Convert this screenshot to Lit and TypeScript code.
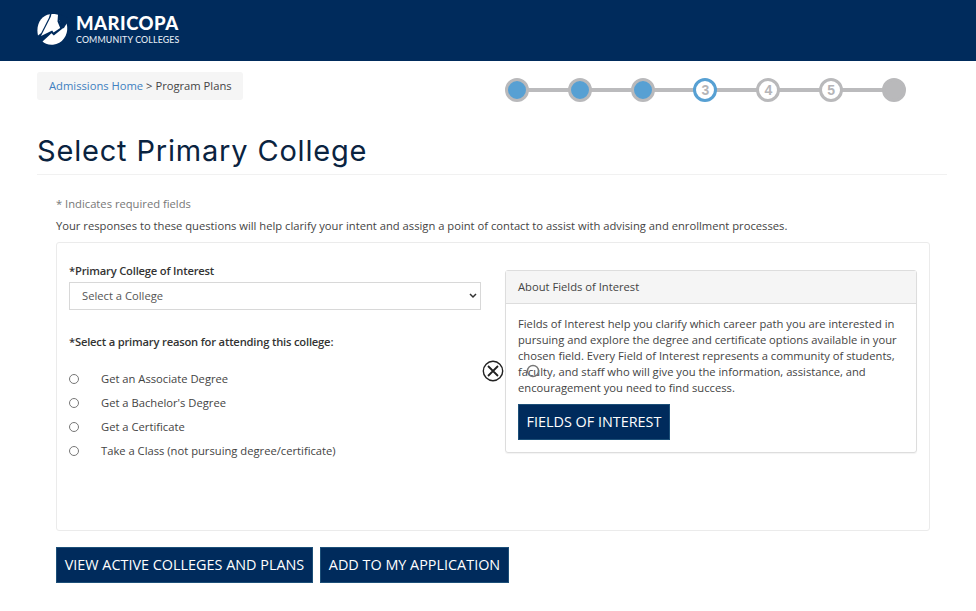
import { LitElement, html, css } from "lit";
import { customElement, property } from "lit/decorators.js";
import { classMap } from "lit/directives/class-map.js";

@customElement("college-header")
class CollegeHeader extends LitElement {
  static styles = css`
    :host { display: flex; gap: 8px; height: 61px; background: #002b5c; box-sizing: border-box; padding: 13px 0 0 36px; }
    svg { display: block; }
    .mark { fill: #fff; }
    .words { white-space: nowrap; padding-top: 1px; }
    .name { font: 900 18.5px/19px Lato, sans-serif; color: #fff; letter-spacing: 0.5px; }
    .sub { font: 500 8.8px/11px Lato, sans-serif; color: #e2eaf3; letter-spacing: 0.16px; margin-top: 1px; }
  `;
  render() {
    return html`<svg width="32" height="34" viewBox="0 0 32 34">
      <path class="mark" d="M2 22.500 C-.5 12 5 2 14 1.200 L12.800 5 L5.200 20 Z" />
      <path class="mark" d="M14.800 3.800 L15.500 1 C18 .8 20.500 1 22 1.800 L21.500 8.500 L24.200 15 L17.500 19.600 L16.200 17.500 L5 23 Z" />
      <path class="mark" d="M23.500 2.500 C28 5 31 9 31.200 14 C32 22 26.500 31 17 31.700 C12 32 8.500 30.700 6.500 28.500 L15.500 20.200 L17.800 22.500 L28.500 14 L23 7 Z" />
      <path fill="#002b5c" d="M23 1 L33 5 L30.800 10.500 L27.500 15.500 L22 5 Z" />
    </svg>
    <div class="words"><div class="name">MARICOPA</div><div class="sub">COMMUNITY COLLEGES</div></div>`;
  }
}

@customElement("step-track")
class StepTrack extends LitElement {
  static styles = css`
    :host { display: flex; align-items: center; justify-content: space-between; width: 401px; height: 24px;
      background: linear-gradient(#bbbbbd, #bbbbbd) center / 380px 4px no-repeat; }
    .step { width: 24px; height: 24px; box-sizing: border-box; border-radius: 50%; border: 3px solid #b9b9bb;
      display: flex; align-items: center; justify-content: center; background: #fff; color: #b5b5b8;
      font: 700 14px/18px "Liberation Sans", sans-serif; }
    .done { background: #57a0d3; }
    .current { border-color: #57a0d3; }
    .last { background: #b9b9bb; }
  `;
  render() {
    return ["done", "done", "done", "current", "todo", "todo", "last"].map(
      (kind, i) => html`<span class=${classMap({ step: true, [kind]: true })}>${i > 2 && i < 6 ? i : ""}</span>`
    );
  }
}

@customElement("radio-option")
class RadioOption extends LitElement {
  @property() label = "";
  static styles = css`
    :host { display: flex; align-items: center; height: 24px; gap: 22px; }
    .dot { width: 10px; height: 10px; box-sizing: border-box; border: 1px solid #777; border-radius: 50%; background: #fff; }
  `;
  render() {
    return html`<span class="dot"></span><span>${this.label}</span>`;
  }
}

const reasons = [
  "Get an Associate Degree",
  "Get a Bachelor's Degree",
  "Get a Certificate",
  "Take a Class (not pursuing degree/certificate)",
];

const about = [
  "Fields of Interest help you clarify which career path you are interested in",
  "pursuing and explore the degree and certificate options available in your",
  "chosen field. Every Field of Interest represents a community of students,",
  "faculty, and staff who will give you the information, assistance, and",
  "encouragement you need to find success.",
];

@customElement("app-root")
class AppRoot extends LitElement {
  static styles = css`
    :host { display: block; height: 611px; overflow: hidden; position: relative; background: #fff;
      font: 11.21px/16px "Open Sans", sans-serif; color: #444; }
    .top { display: flex; justify-content: space-between; padding: 11px 70px 0 37px; }
    .crumbs { width: 206px; height: 28px; box-sizing: border-box; padding-left: 12px; line-height: 28px; background: #f5f5f5; border-radius: 3px; white-space: nowrap; }
    .link { color: #4080c0; }
    step-track { margin-top: 6px; }
    h1 { margin: 28px 29px 0 37px; height: 45px; box-sizing: border-box; border-bottom: 1px solid #f1f1f1;
      font: 400 29px/42px Inter, sans-serif; letter-spacing: 0.82px; color: #0a2340; white-space: nowrap; }
    .notes { padding: 18px 0 0 56px; line-height: 22px; white-space: nowrap; }
    .required { color: #777; }
    .well { display: flex; justify-content: space-between; margin: 5px 46px 0 56px; height: 289px; box-sizing: border-box;
      border: 1px solid #ebebeb; border-radius: 3px; padding: 27px 12px 0; }
    .form { width: 412px; }
    .label { height: 12px; line-height: 2px; color: #333; font-weight: 600; letter-spacing: -0.195px; white-space: nowrap; }
    .select { height: 28px; box-sizing: border-box; border: 1px solid #d8d8d8; display: flex; align-items: center;
      justify-content: space-between; padding: 0 3px 0 12px; color: #555; }
    .reason { margin-top: 31px; height: 26px; }
    .panel { width: 412px; height: 183px; box-sizing: border-box; border: 1px solid #ddd; border-radius: 3px; box-shadow: 0 1px 1px #0000000d; }
    .title { height: 33px; line-height: 32px; box-sizing: border-box; padding-left: 12px; background: #f5f5f5; border-bottom: 1px solid #ddd; }
    .copy { padding: 12px 0 8px 12px; white-space: nowrap; }
    .btn { display: inline-flex; align-items: center; justify-content: center; height: 36px; box-sizing: border-box;
      background: #002b5c; border: 1px solid #1c4f78; color: #fff; font-size: 14.4px; white-space: nowrap; }
    .fields { width: 152px; margin-left: 12px; }
    .actions { display: flex; gap: 7px; padding: 16px 0 0 56px; }
    .view { width: 257px; }
    .add { width: 189px; }
    .cursor { position: absolute; left: 482px; top: 360px; }
    .ring { position: absolute; left: 526px; top: 364px; }
  `;
  render() {
    return html`
      <college-header></college-header>
      <div class="top">
        <div class="crumbs"><span class="link">Admissions Home</span> &gt; Program Plans</div>
        <step-track></step-track>
      </div>
      <h1>Select Primary College</h1>
      <div class="notes">
        <div class="required">* Indicates required fields</div>
        <div>Your responses to these questions will help clarify your intent and assign a point of contact to assist with advising and enrollment processes.</div>
      </div>
      <div class="well">
        <div class="form">
          <div class="label">*Primary College of Interest</div>
          <div class="select">
            <span>Select a College</span>
            <svg width="8" height="6" viewBox="0 0 8 6"><path d="M1 1L4 4L7 1" fill="none" stroke="#333" stroke-width="1.500" /></svg>
          </div>
          <div class="label reason">*Select a primary reason for attending this college:</div>
          ${reasons.map((r) => html`<radio-option label=${r}></radio-option>`)}
        </div>
        <div class="panel">
          <div class="title">About Fields of Interest</div>
          <div class="copy">${about.map((l) => html`<div>${l}</div>`)}</div>
          <span class="btn fields">FIELDS OF INTEREST</span>
        </div>
      </div>
      <div class="actions"><span class="btn view">VIEW ACTIVE COLLEGES AND PLANS</span><span class="btn add">ADD TO MY APPLICATION</span></div>
      <svg class="cursor" width="22" height="22" viewBox="0 0 22 22"><circle cx="11" cy="11" r="9.700" fill="#fff" stroke="#222" stroke-width="1.400" /><path d="M6 6L16 16M16 6L6 16" stroke="#222" stroke-width="1.800" /></svg>
      <svg class="ring" width="14" height="14" viewBox="0 0 14 14"><circle cx="7" cy="7" r="5.500" fill="none" stroke="#777" stroke-width="1.400" /></svg>
    `;
  }
}
